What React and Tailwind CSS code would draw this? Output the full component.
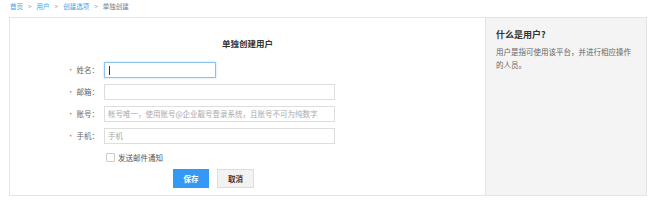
import React from 'react'

const font = { fontFamily: '"Noto Sans CJK SC", "Liberation Sans", sans-serif' }

const Field = ({ label, placeholder, focused, short }) => (
  <div className="flex items-center h-[16px]">
    <div className="w-[48px] flex justify-end items-center text-[7.5px] text-[#666] pr-[5px]">
      <span className="text-[#f0645a] mr-[2px]">•</span>
      <span>{label}：</span>
    </div>
    <div
      className={`${short ? 'w-[112px]' : 'w-[231px]'} h-[16px] border bg-white flex items-center px-[3px] text-[7.5px] text-[#aaa] ${
        focused ? 'border-[#8cc2ec] shadow-[0_0_2px_#b6d9f5]' : 'border-[#dedede]'
      }`}
    >
      {focused ? <span className="w-px h-[9px] bg-[#333] ml-[1px]" /> : placeholder}
    </div>
  </div>
)

export default function App() {
  return (
    <div className="w-[650px] h-[201px] bg-white overflow-hidden" style={font}>
      {/* breadcrumb */}
      <div className="h-[17px] pl-[10px] flex items-center gap-[5px] text-[6.5px] pb-[4px]">
        <span className="text-[#4b9be4]">首页</span>
        <span className="text-[#999]">&gt;</span>
        <span className="text-[#4b9be4]">用户</span>
        <span className="text-[#999]">&gt;</span>
        <span className="text-[#4b9be4]">创建选项</span>
        <span className="text-[#999]">&gt;</span>
        <span className="text-[#777]">单独创建</span>
      </div>

      <div className="ml-[9px] w-[638px] h-[179px] border border-[#e4e4e4] flex">
        {/* form */}
        <div className="w-[476px] border-r border-[#e4e4e4] flex flex-col">
          <div className="text-center text-[8.5px] font-bold text-[#333] mt-[19px] leading-[12px]">
            单独创建用户
          </div>
          <div className="mt-[13px] ml-[46px] flex flex-col gap-[6px]">
            <Field label="姓名" focused short />
            <Field label="邮箱" placeholder="" />
            <Field label="账号" placeholder="帐号唯一，使用账号@企业靓号登录系统，且账号不可为纯数字" />
            <Field label="手机" placeholder="手机" />
          </div>
          <div className="mt-[8px] ml-[96px] flex items-center gap-[3px]">
            <span className="w-[9px] h-[9px] border border-[#ccc] bg-white rounded-[1px]" />
            <span className="text-[7.5px] text-[#555]">发送邮件通知</span>
          </div>
          <div className="mt-[6px] ml-[163px] flex gap-[8px]">
            <button className="w-[36px] h-[19px] bg-[#3499f6] text-white text-[7.5px] font-bold">保存</button>
            <button className="w-[37px] h-[19px] bg-[#f2f2f2] border border-[#dedede] text-[#333] text-[7.5px] font-bold">
              取消
            </button>
          </div>
        </div>

        {/* help */}
        <div className="flex-1 bg-[#f4f4f4] pl-[10px] pr-[8px] pt-[10px]">
          <div className="text-[9px] font-bold text-[#333] leading-[14px]">什么是用户?</div>
          <p className="mt-[3px] text-[7.5px] leading-[13px] text-[#666]">
            用户是指可使用该平台，并进行相应操作的人员。
          </p>
        </div>
      </div>
    </div>
  )
}
